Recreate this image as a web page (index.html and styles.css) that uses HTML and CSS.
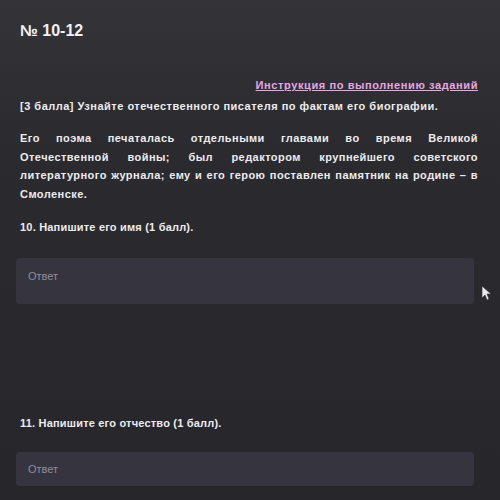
FILE: index.html
```html
<!DOCTYPE html>
<html lang="ru">
<head>
<meta charset="utf-8">
<link rel="stylesheet" href="styles.css">
</head>
<body>
<div class="page">
  <h1 class="title">№ 10-12</h1>
  <div class="link-row"><a class="link" href="#">Инструкция по выполнению заданий</a></div>
  <p class="task">[3 балла] Узнайте отечественного писателя по фактам его биографии.</p>
  <p class="text">
    <span class="line">Его поэма печаталась отдельными главами во время Великой</span>
    <span class="line">Отечественной войны; был редактором крупнейшего советского</span>
    <span class="line">литературного журнала; ему и его герою поставлен памятник на родине – в</span>
    <span class="line last">Смоленске.</span>
  </p>
  <p class="question q10">10. Напишите его имя (1 балл).</p>
  <div class="answer a1">Ответ</div>
  <p class="question q11">11. Напишите его отчество (1 балл).</p>
  <div class="answer a2">Ответ</div>
</div>
<svg class="cursor" width="10" height="16" viewBox="0 0 10 16"><path d="M1 1 L1 13 L4 10 L6 15 L8 14 L6 9 L10 9 Z" fill="#e8e8ee" stroke="#333" stroke-width="0.6"/></svg>
</body>
</html>
```
FILE: styles.css
```css
html, body {
  margin: 0;
  padding: 0;
}
body {
  width: 500px;
  height: 500px;
  overflow: hidden;
  background: linear-gradient(180deg, #343438 0%, #2b2a2f 30%, #27262b 100%);
  font-family: "Liberation Sans", Arial, sans-serif;
  color: #ececf0;
  position: relative;
}
.page {
  padding: 22px 22px 0 20px;
}
.title {
  margin: 0;
  font-size: 16px;
  font-weight: bold;
  line-height: 18px;
  color: #f2f2f4;
}
.link-row {
  display: flex;
  justify-content: flex-end;
  margin-top: 38px;
}
.link {
  color: #e8a6e6;
  font-size: 11px;
  font-weight: bold;
  letter-spacing: 0.6px;
  line-height: 14px;
  text-decoration: underline;
}
.task {
  margin: 7px 0 0;
  font-size: 11px;
  font-weight: bold;
  letter-spacing: 0.5px;
  line-height: 14px;
}
.text {
  margin: 16px 0 0;
  font-size: 11px;
  font-weight: bold;
  letter-spacing: 0.45px;
  line-height: 18.7px;
}
.line {
  display: block;
  text-align: justify;
  text-align-last: justify;
}
.line.last {
  text-align-last: left;
}
.question {
  margin: 0;
  font-size: 11px;
  font-weight: bold;
  letter-spacing: 0.2px;
  line-height: 14px;
}
.q10 { margin-top: 16px; }
.q11 { margin-top: 112px; }
.answer {
  box-sizing: border-box;
  margin-left: -4px;
  width: 458px;
  background: #36343f;
  border-radius: 4px;
  color: #8f8d98;
  font-size: 11px;
  line-height: 14px;
  padding: 0 12px;
  display: flex;
  align-items: center;
}
.a1 { margin-top: 24px; height: 46px; padding-bottom: 10px; }
.a2 { margin-top: 22px; height: 34px; }
.cursor {
  position: absolute;
  left: 481px;
  top: 285px;
}
```
